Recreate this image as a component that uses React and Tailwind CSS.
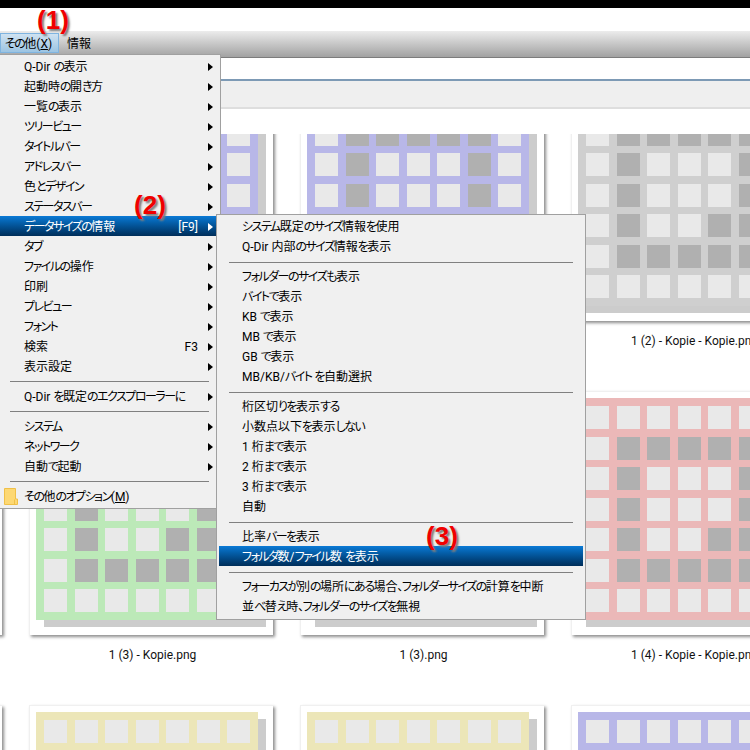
const FONT = "font-['Roboto','Noto_Sans_CJK_JP',sans-serif]";
const PATTERN = [
  '0000000',
  '0111110',
  '0100010',
  '0100010',
  '0100110',
  '0111110',
  '0000000',
];

// labels stay empty where the menus cover them or the row runs off the page
const THUMBS = [
  { bg: 'bg-[#cfcfcf]', label: '' },
  { bg: 'bg-[#b8b7e8]', label: '' },
  { bg: 'bg-[#b8b7e8]', label: '' },
  { bg: 'bg-[#cfcfcf]', label: '1 (2) - Kopie - Kopie.png' },
  { bg: 'bg-[#bce9b8]', label: '' },
  { bg: 'bg-[#bce9b8]', label: '1 (3) - Kopie.png' },
  { bg: 'bg-[#bce9b8]', label: '1 (3).png' },
  { bg: 'bg-[#ebb8b8]', label: '1 (4) - Kopie - Kopie.png' },
  { bg: 'bg-[#ebb8b8]', label: '' },
  { bg: 'bg-[#ece6b8]', label: '' },
  { bg: 'bg-[#ece6b8]', label: '' },
  { bg: 'bg-[#b8b7e8]', label: '' },
];

const MAIN_MENU = [
  { t: 'Q-Dir の表示', sub: true },
  { t: '起動時の開き方', sub: true },
  { t: '一覧の表示', sub: true },
  { t: 'ツリービュー', sub: true },
  { t: 'タイトルバー', sub: true },
  { t: 'アドレスバー', sub: true },
  { t: '色とデザイン', sub: true },
  { t: 'ステータスバー', sub: true },
  { t: 'データサイズの情報', sub: true, key: '[F9]', active: true },
  { t: 'タブ', sub: true },
  { t: 'ファイルの操作', sub: true },
  { t: '印刷', sub: true },
  { t: 'プレビュー', sub: true },
  { t: 'フォント', sub: true },
  { t: '検索', sub: true, key: 'F3' },
  { t: '表示設定', sub: true },
  { sep: true },
  { t: 'Q-Dir を既定のエクスプローラーに', sub: true },
  { sep: true },
  { t: 'システム', sub: true },
  { t: 'ネットワーク', sub: true },
  { t: '自動で起動', sub: true },
  { sep: true },
  { t: 'その他のオプション', mnemonic: 'M', folder: true },
];

const SIZE_MENU = [
  { t: 'システム既定のサイズ情報を使用' },
  { t: 'Q-Dir 内部のサイズ情報を表示' },
  { sep: true },
  { t: 'フォルダーのサイズも表示' },
  { t: 'バイトで表示' },
  { t: 'KB で表示' },
  { t: 'MB で表示' },
  { t: 'GB で表示' },
  { t: 'MB/KB/バイト を自動選択' },
  { sep: true },
  { t: '桁区切りを表示する' },
  { t: '小数点以下を表示しない' },
  { t: '1 桁まで表示' },
  { t: '2 桁まで表示' },
  { t: '3 桁まで表示' },
  { t: '自動' },
  { sep: true },
  { t: '比率バーを表示' },
  { t: 'フォルダ数/ファイル数 を表示', active: true },
  { sep: true },
  { t: 'フォーカスが別の場所にある場合、フォルダーサイズの計算を中断' },
  { t: '並べ替え時、フォルダーのサイズを無視' },
];

// kana run narrower than kanji in the original UI font
const Jp = ({ text }) =>
  text.split(/([\u3040-\u30ff、]+)/).map((part, i) =>
    i % 2 === 1 ? (
      <span key={i} className="tracking-[-1.5px]">{part}</span>
    ) : (
      part
    ),
  );

const Thumb = ({ bg, label }) => (
  <div className="flex flex-col items-center w-[244px] h-[314px]">
    <div className="w-[244px] h-[244px] shrink-0 bg-white pl-[6px] pt-[6px] border-t border-l border-[#f0f0f0] shadow-[2px_2px_3px_#8c8c8c]">
      <div className={`${bg} w-[222px] h-[222px] p-2 grid grid-cols-[repeat(7,23px)] grid-rows-[repeat(7,23px)] gap-[7.5px] shadow-[8px_7px_0_#cccccc]`}>
        {PATTERN.join('').split('').map((c, i) => (
          <div key={i} className={c === '1' ? 'bg-[#b0b0b0]' : 'bg-[#e9e9e9]'} />
        ))}
      </div>
    </div>
    <div className="mt-[11px] w-[262px] pl-[3px] text-center text-xs leading-[18px] whitespace-nowrap text-[#111]">{label}</div>
  </div>
);

const Arrow = () => (
  <svg width="5" height="8" viewBox="0 0 5 8" className="shrink-0">
    <path d="M0 0 L5 4 L0 8 Z" fill="currentColor" />
  </svg>
);

const Folder = () => (
  <svg width="14" height="17" viewBox="0 0 14 17" className="absolute left-[4px] top-[2px]">
    <path d="M0.5 0.5 H11.5 V11 H13.5 V16.5 H0.5 Z" fill="#fdd873" stroke="#f0c048" />
    <path d="M10.5 11.5 V16" stroke="#f0c048" fill="none" />
  </svg>
);

const Annotation = ({ n, className }) => (
  <div className={`absolute font-['Liberation_Sans',sans-serif] font-bold text-[26px] leading-[28px] text-[#f00000] [text-shadow:2px_2px_2px_#7c7c7c] ${className}`}>
    ({n})
  </div>
);

const rowBg = 'bg-linear-to-b from-[#0a7ad6] to-[#002e5a] text-white';

const App = () => {
  return (
    <div className={`relative w-[750px] h-[750px] overflow-hidden bg-white flex flex-col text-xs ${FONT} [font-feature-settings:'palt'] text-black`}>
      <div className="h-2 shrink-0 bg-black" />
      <div className="h-[23px] shrink-0 bg-white" />
      {/* menu bar */}
      <div className="h-[27px] shrink-0 flex items-start pt-[2px] bg-linear-to-b from-[#ececec] to-[#a2a2a2] border-b border-[#7c7c7c]">
        <div className="w-[59px] h-[20px] pt-px pr-[2px] flex items-center justify-center bg-linear-to-b from-[#cfe2f1] to-[#9cc4e2] border border-[#7fb4e0]">
          <Jp text="その他" />(<span className="underline">X</span>)
        </div>
        <div className="ml-[8px] h-[20px] pt-px flex items-center">情報</div>
      </div>
      {/* address */}
      <div className="h-[23px] shrink-0 bg-white border-b-2 border-[#7d9ab5]" />
      {/* toolbar */}
      <div className="h-[28px] shrink-0 bg-[#efefef] border-b-2 border-[#dedede]" />
      <div className="h-[25px] shrink-0 bg-white" />
      {/* thumbnails */}
      <div className="flex-1 overflow-hidden">
        <div className="ml-[-242px] mt-[-57px] grid grid-cols-[repeat(4,244px)] gap-x-[27px] auto-rows-[314px]">
          {THUMBS.map((th, i) => (
            <Thumb key={i} {...th} />
          ))}
        </div>
      </div>

      {/* main menu */}
      <div className="absolute left-[-1px] top-[54px] w-[222px] h-[455px] bg-[#f0f0f0] border border-[#a0a0a0] py-px">
        {MAIN_MENU.map((it, i) =>
          it.sep ? (
            <div key={i} className="h-[10px] flex items-center pl-[10px] pr-[11px]">
              <div className="w-full h-px bg-[#808080]" />
            </div>
          ) : (
            <div key={i} className={`relative h-5 pt-px flex items-center pl-[24px] pr-[7px] ${it.active ? rowBg : ''}`}>
              {it.folder && <Folder />}
              <span className="flex-1 whitespace-nowrap">
                <Jp text={it.t} />
                {it.mnemonic && (
                  <>
                    (<span className="underline">{it.mnemonic}</span>)
                  </>
                )}
              </span>
              {it.key && <span className="mr-[10px]">{it.key}</span>}
              {it.sub && <Arrow />}
            </div>
          ),
        )}
      </div>

      {/* size submenu */}
      <div className="absolute left-[216px] top-[214px] w-[370px] h-[406px] bg-[#f0f0f0] border border-[#a0a0a0] px-[2px] pt-px">
        {SIZE_MENU.map((it, i) =>
          it.sep ? (
            <div key={i} className="h-[10px] flex items-center pt-[2px] px-[10px]">
              <div className="w-full h-px bg-[#808080]" />
            </div>
          ) : (
            <div key={i} className={`h-5 pt-px flex items-center pl-[23px] whitespace-pre ${it.active ? rowBg : ''}`}>
              <span>
                <Jp text={it.t} />
              </span>
            </div>
          ),
        )}
      </div>

      <Annotation n={1} className="left-[37px] top-[6px]" />
      <Annotation n={2} className="left-[134px] top-[191px]" />
      <Annotation n={3} className="left-[426px] top-[522px]" />
    </div>
  );
};

export default App;
